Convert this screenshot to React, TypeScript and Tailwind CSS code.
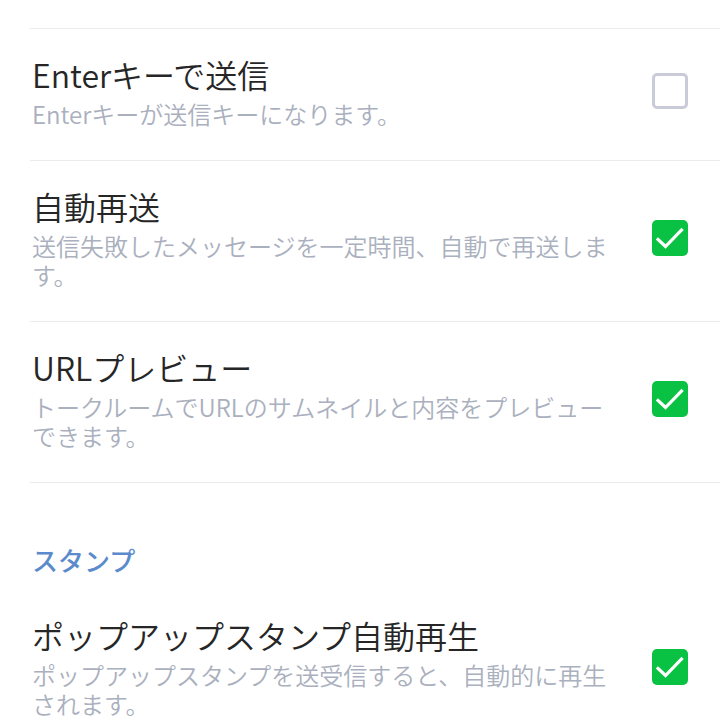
import React from "react";

type Setting = {
  title: string;
  desc: string;
  checked: boolean;
};

const chatSettings: Setting[] = [
  { title: "Enterキーで送信", desc: "Enterキーが送信キーになります。", checked: false },
  {
    title: "自動再送",
    desc: "送信失敗したメッセージを一定時間、自動で再送します。",
    checked: true,
  },
  {
    title: "URLプレビュー",
    desc: "トークルームでURLのサムネイルと内容をプレビューできます。",
    checked: true,
  },
];

const stampSettings: Setting[] = [
  {
    title: "ポップアップスタンプ自動再生",
    desc: "ポップアップスタンプを送受信すると、自動的に再生されます。",
    checked: true,
  },
];

function CheckBox({ checked }: { checked: boolean }) {
  if (!checked) {
    return <div className="w-[36px] h-[36px] shrink-0 rounded-[5px] border-[3px] border-[#c9cbd9] bg-white" />;
  }
  return (
    <div className="w-[36px] h-[36px] shrink-0 rounded-[5px] bg-[#09c142] flex items-center justify-center">
      <svg width="36" height="36" viewBox="0 0 36 36" fill="none">
        <path d="M6 19.5 L13.5 26.5 L29.5 10" stroke="#fff" strokeWidth="3.2" strokeLinecap="square" strokeLinejoin="miter" />
      </svg>
    </div>
  );
}

function Row({ s, border }: { s: Setting; border: boolean }) {
  return (
    <div className={`flex items-center pl-[2px] pr-[32px] pt-[25px] pb-[31px] ${border ? "border-b border-[#ececee]" : ""}`}>
      <div className="w-[588px]">
        <div className="text-[32px] leading-[40px] font-[350] text-[#262626]">{s.title}</div>
        <div className="mt-[5px] text-[24px] leading-[29.5px] font-[350] text-[#aab0be]">{s.desc}</div>
      </div>
      <div className="flex-1" />
      <CheckBox checked={s.checked} />
    </div>
  );
}

export default function App() {
  return (
    <div
      className="w-[720px] h-[720px] overflow-hidden bg-white"
      style={{ fontFamily: '"Noto Sans CJK JP", "Noto Sans", sans-serif' }}
    >
      <div className="ml-[30px]">
        <div className="h-[29px] border-b border-[#ececee]" />
        {chatSettings.map((s, i) => (
          <Row key={i} s={s} border={true} />
        ))}

        <div className="pl-[2px] pt-[59px] pb-[12px] text-[26px] leading-[36px] font-medium text-[#5b8bcb]">スタンプ</div>

        {stampSettings.map((s, i) => (
          <Row key={i} s={s} border={false} />
        ))}
      </div>
    </div>
  );
}
